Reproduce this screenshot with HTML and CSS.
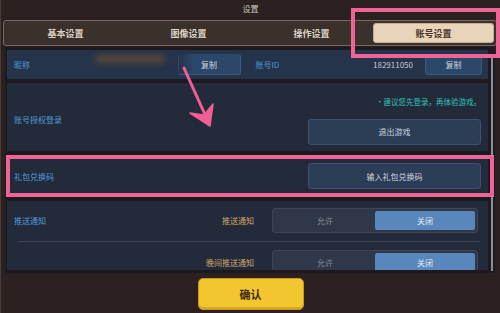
FILE: index.html
```html
<!DOCTYPE html>
<html lang="zh-CN">
<head>
    <meta charset="UTF-8">
    <meta name="viewport" content="width=device-width, initial-scale=1.0">
    <title>设置</title>
    <link rel="stylesheet" href="styles.css">
</head>
<body>
    <div class="screen">
        <div class="title">设置</div>

        <nav class="tabs">
            <div class="tab">基本设置</div>
            <div class="tab">图像设置</div>
            <div class="tab">操作设置</div>
            <div class="tab active">账号设置</div>
        </nav>

        <div class="panel">
            <div class="list">
                <div class="row row-id">
                    <div class="half">
                        <span class="label">昵称</span>
                        <span class="nick"></span>
                        <button class="btn btn-copy">复制</button>
                    </div>
                    <div class="half half-right">
                        <span class="label">账号ID</span>
                        <span class="uid">182911050</span>
                        <button class="btn btn-copy small">复制</button>
                    </div>
                </div>

                <div class="section login">
                    <span class="label">账号授权登录</span>
                    <div class="login-right">
                        <span class="hint">•建议您先登录，再体验游戏。</span>
                        <button class="btn btn-wide">退出游戏</button>
                    </div>
                </div>

                <div class="section gift">
                    <span class="label">礼包兑换码</span>
                    <button class="btn btn-wide">输入礼包兑换码</button>
                </div>

                <div class="section push">
                    <div class="push-row">
                        <span class="label">推送通知</span>
                        <span class="sub-label">推送通知</span>
                        <div class="switch">
                            <span class="opt">允许</span>
                            <span class="opt on">关闭</span>
                        </div>
                    </div>
                    <div class="divider"></div>
                    <div class="push-row">
                        <span class="sub-label">晚间推送通知</span>
                        <div class="switch">
                            <span class="opt">允许</span>
                            <span class="opt on">关闭</span>
                        </div>
                    </div>
                </div>
            </div>
            <div class="scrollbar"></div>
        </div>

        <div class="footer">
            <button class="confirm">确认</button>
        </div>

        <!-- annotations drawn over the screenshot -->
        <div class="mark mark-tab"></div>
        <div class="mark mark-gift"></div>
        <svg class="arrow" width="500" height="313" viewBox="0 0 500 313">
            <path d="M183 68 L206 119" stroke="#ef5f94" stroke-width="3" stroke-linecap="round" fill="none"/>
            <path d="M209 126 L189 113 L203 115 L212 104 Z" fill="#ef5f94" stroke="#ef5f94" stroke-width="1.5" stroke-linejoin="round"/>
        </svg>
    </div>
</body>
</html>
```

FILE: styles.css
```css
* {
    box-sizing: border-box;
}

body {
    margin: 0;
    padding: 0;
    background: #2a2120;
    font-family: "Noto Sans CJK SC", "Noto Sans", sans-serif;
}

.screen {
    position: relative;
    width: 500px;
    height: 313px;
    overflow: hidden;
    background: #2a2120;
    border-left: 1px solid #4a3c36;
    display: flex;
    flex-direction: column;
}

.title {
    height: 20px;
    line-height: 18px;
    text-align: center;
    font-size: 8px;
    color: #cfc6be;
}

.tabs {
    display: grid;
    grid-template-columns: repeat(4, 1fr);
    height: 26px;
    margin: 0 3px 0 2px;
    border: 1px solid #76685f;
    border-radius: 3px;
    background: #3a302c;
}

.tab {
    display: flex;
    align-items: center;
    justify-content: center;
    font-size: 9px;
    font-weight: bold;
    color: #ddd2c6;
}

.tab.active {
    margin: 2px 2px 2px 0;
    background: #e8d4bb;
    border: 1px solid #c4ad93;
    border-radius: 3px;
    color: #4a3629;
}

.panel {
    display: flex;
    height: 226px;
    margin: 1px 5px 0 4px;
    padding: 3px 2px 2px 2px;
    background: #1c1a20;
}

.list {
    flex: 1;
    height: 220px;
    overflow: hidden;
    display: flex;
    flex-direction: column;
    gap: 4px;
}

.scrollbar {
    width: 2px;
    margin: 5px 0 0 3px;
    background: #8d8f96;
}

.label {
    font-size: 8px;
    color: #4d9ad6;
}

.btn {
    font-family: inherit;
    font-size: 8px;
    color: #cfd6e0;
    background: #2c3d56;
    border: 1px solid #3d5070;
    border-radius: 3px;
    padding: 0;
}

.row-id {
    display: flex;
    height: 29px;
    flex-shrink: 0;
    background: #25344a;
}

.half {
    flex: 1;
    display: flex;
    align-items: center;
    padding: 0 6px 0 7px;
}

.half-right {
    padding-left: 9px;
}

.nick {
    width: 70px;
    height: 8px;
    margin: -12px 0 0 65px;
    background: #5a4638;
    border-radius: 4px;
    filter: blur(3px);
}

.btn-copy {
    width: 63px;
    height: 21px;
    margin-left: auto;
    background: linear-gradient(90deg, #25344a 0%, #2c4868 25%);
    border-color: transparent #3b5a7e #3b5a7e transparent;
}

.btn-copy.small {
    width: 57px;
    margin-left: 12px;
    background: #2c4868;
    border-color: #3b5a7e;
}

.uid {
    margin-left: auto;
    font-size: 8px;
    color: #c6cad2;
}

.section {
    flex-shrink: 0;
    background: #232b3b;
}

.login {
    display: flex;
    align-items: center;
    justify-content: space-between;
    height: 68px;
    padding: 0 7px;
}

.login .label {
    padding-top: 4px;
}

.login-right {
    display: flex;
    flex-direction: column;
    align-items: flex-end;
    gap: 12px;
    padding-top: 6px;
}

.hint {
    font-size: 7.5px;
    color: #2fc2b6;
}

.btn-wide {
    width: 173px;
    height: 26px;
}

.gift {
    display: flex;
    align-items: center;
    justify-content: space-between;
    height: 42px;
    padding: 0 7px;
}

.push {
    flex: 1;
    padding-top: 7px;
    display: flex;
    flex-direction: column;
}

.push-row {
    display: flex;
    align-items: center;
    justify-content: flex-end;
    height: 25px;
    flex-shrink: 0;
    padding: 0 10px 0 7px;
}

.push-row .label {
    margin-right: auto;
}

.sub-label {
    font-size: 8px;
    color: #d3a66c;
    margin-right: 18px;
}

.switch {
    display: grid;
    grid-template-columns: 1fr 1fr;
    width: 206px;
    height: 25px;
    padding: 2px;
    background: #2f3848;
    border: 1px solid #3c4658;
    border-radius: 3px;
}

.opt {
    display: flex;
    align-items: center;
    justify-content: center;
    font-size: 8px;
    color: #868c98;
}

.opt.on {
    background: #5986bb;
    border-radius: 2px;
    color: #e8eef6;
}

.divider {
    height: 1px;
    flex-shrink: 0;
    margin: 8px 8px 8px 11px;
    background: #394559;
}

.footer {
    flex: 1;
    display: flex;
    justify-content: center;
    padding-top: 5px;
}

.confirm {
    width: 106px;
    height: 32px;
    font-family: inherit;
    font-size: 11px;
    font-weight: bold;
    color: #3d2a0e;
    background: #f3c52f;
    border: 1px solid #c8981c;
    border-radius: 5px;
    box-shadow: inset 0 -2px 0 #d9a81e;
}

.mark {
    position: absolute;
    border: 4px solid #ef6496;
}

.mark-tab {
    left: 350px;
    top: 8px;
    width: 149px;
    height: 50px;
}

.mark-gift {
    left: 5px;
    top: 155px;
    width: 488px;
    height: 42px;
}

.arrow {
    position: absolute;
    left: 0;
    top: 0;
    pointer-events: none;
}
```
